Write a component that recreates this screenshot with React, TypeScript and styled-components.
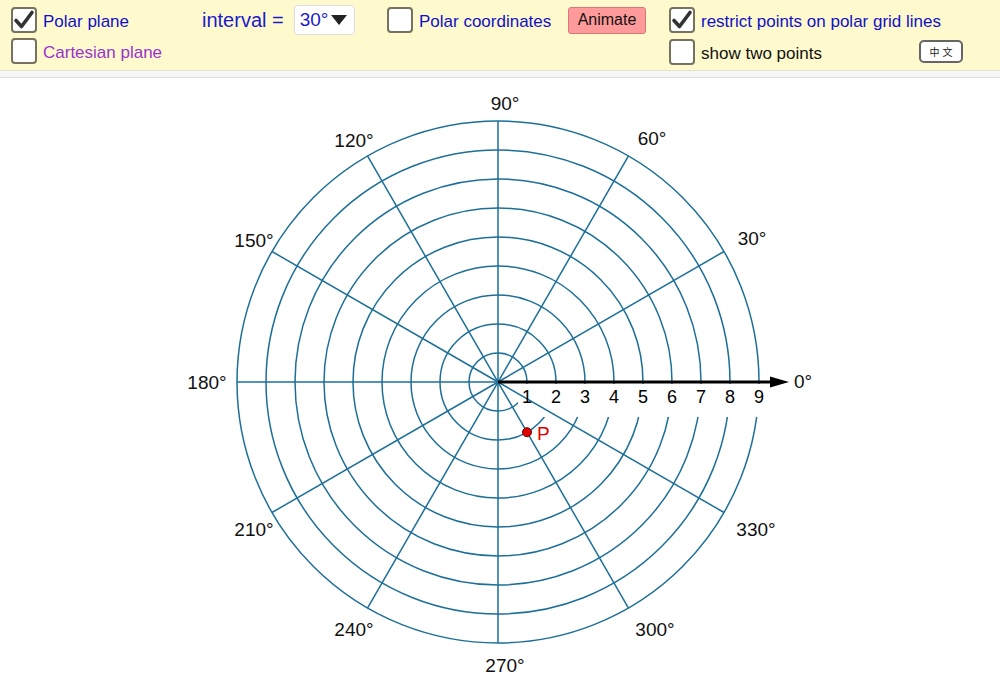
import React from 'react';
import styled, { createGlobalStyle } from 'styled-components';

const GlobalStyle = createGlobalStyle`
  html, body {
    margin: 0;
    padding: 0;
    background: #fff;
    overflow: hidden;
  }
  body {
    font-family: "Liberation Sans", Arial, sans-serif;
  }
`;

const Page = styled.div`
  width: 1000px;
  height: 690px;
  display: flex;
  flex-direction: column;
`;

const Toolbar = styled.div`
  flex: 0 0 70px;
  box-sizing: border-box;
  background: #fffacd;
  padding: 7px 0 0 11px;
  display: grid;
  grid-template-columns: 191px 185px 181px 101px 1fr;
  grid-template-rows: 26px 26px;
  row-gap: 5px;
  align-items: center;
`;

const Rule = styled.div`
  flex: 0 0 6px;
  background: #f7f7f7;
  border-top: 1px solid #e4e1cc;
  border-bottom: 1px solid #dcdcdc;
`;

const Cell = styled.div<{ $col: number; $row: number; $down?: number }>`
  grid-column: ${(p) => p.$col};
  grid-row: ${(p) => p.$row};
  display: flex;
  align-items: center;
  position: relative;
  top: ${(p) => p.$down ?? 0}px;
`;

const Option = styled.label<{ $color: string }>`
  display: flex;
  align-items: center;
  gap: 6px;
  font-size: 17px;
  color: ${(p) => p.$color};
  cursor: pointer;
`;

const OptionText = styled.span`
  position: relative;
  top: 2px;
`;

const Box = styled.span`
  flex: 0 0 26px;
  width: 26px;
  height: 26px;
  box-sizing: border-box;
  border: 2px solid #77725f;
  border-radius: 4px;
  background: #fff;
  display: flex;
  align-items: center;
  justify-content: center;
`;

const IntervalLabel = styled.span`
  font-size: 20px;
  color: #1a1acc;
  margin-right: 10px;
`;

const Select = styled.div`
  width: 61px;
  height: 30px;
  box-sizing: border-box;
  border: 1px solid #dcdcdc;
  border-radius: 4px;
  background: #fff;
  display: flex;
  align-items: center;
  padding-left: 5px;
  gap: 3px;
  font-size: 19px;
  color: #1a1acc;
`;

const Caret = styled.span`
  width: 0;
  height: 0;
  border-left: 8px solid transparent;
  border-right: 8px solid transparent;
  border-top: 10px solid #222;
`;

const AnimateButton = styled.button`
  width: 78px;
  height: 27px;
  box-sizing: border-box;
  background: #ff9a9a;
  border: 1px solid #d97777;
  border-radius: 3px;
  font-family: "Liberation Sans", Arial, sans-serif;
  font-size: 16px;
  color: #111;
  padding: 0;
`;

const LangButton = styled.button`
  margin-left: auto;
  margin-right: 37px;
  width: 44px;
  height: 23px;
  box-sizing: border-box;
  background: #fff;
  border: 2px solid #666;
  border-radius: 5px;
  font-family: "Noto Sans CJK SC", sans-serif;
  font-size: 10px;
  letter-spacing: 3px;
  color: #222;
  padding: 0 0 0 3px;
  position: relative;
  top: -1px;
`;

const Canvas = styled.div`
  flex: 1 1 auto;
  min-height: 0;
  background: #fff;
  svg {
    display: block;
  }
`;

const Check = ({ on }: { on?: boolean }) => (
  <Box>
    {on && (
      <svg width="22" height="22" viewBox="0 0 22 22">
        <path d="M3 11.5 L8.5 17.5 L19 3.5" fill="none" stroke="#333" strokeWidth="3.6" strokeLinecap="round" strokeLinejoin="round" />
      </svg>
    )}
  </Box>
);

const CX = 498;
const CY = 304;
const STEP = 29;
const GRID = '#1d6f98';

const angleLabels: [string, number, number][] = [
  ['90°', 505, 25],
  ['60°', 652, 60],
  ['30°', 752, 160],
  ['0°', 803, 303],
  ['330°', 756, 451],
  ['300°', 655, 551],
  ['270°', 505, 587],
  ['240°', 354, 551],
  ['210°', 254, 451],
  ['180°', 207, 304],
  ['150°', 254, 162],
  ['120°', 354, 62],
];

const PolarGrid = () => {
  const rings = Array.from({ length: 9 }, (_, i) => (i + 1) * STEP);
  const outer = 9 * STEP;
  const rays = Array.from({ length: 11 }, (_, i) => (i + 1) * 30);
  const pr = 2 * STEP;
  const pa = (-60 * Math.PI) / 180;
  const px = CX + pr * Math.cos(pa);
  const py = CY - pr * Math.sin(pa);
  return (
    <svg width="1000" height="612" viewBox="0 0 1000 612" fontFamily='"Liberation Sans", Arial, sans-serif'>
      {rings.map((r) => (
        <circle key={r} cx={CX} cy={CY} r={r} fill="none" stroke={GRID} strokeWidth="1.5" />
      ))}
      <rect x="518" y="306" width="258" height="33" fill="#fff" />
      {rays.map((a) => {
        const t = (a * Math.PI) / 180;
        return (
          <line
            key={a}
            x1={CX}
            y1={CY}
            x2={CX + outer * Math.cos(t)}
            y2={CY - outer * Math.sin(t)}
            stroke={GRID}
            strokeWidth="1.5"
          />
        );
      })}
      <line x1={CX} y1={CY} x2="772" y2={CY} stroke="#000" strokeWidth="3" />
      <polygon points={`770,${CY - 5.5} 789,${CY} 770,${CY + 5.5}`} fill="#000" />
      {rings.map((r, i) => (
        <text key={r} x={CX + r} y="319" fontSize="18" textAnchor="middle" dominantBaseline="central" fill="#000">
          {i + 1}
        </text>
      ))}
      {angleLabels.map(([t, x, y]) => (
        <text key={t} x={x} y={y} fontSize="19" textAnchor="middle" dominantBaseline="central" fill="#111">
          {t}
        </text>
      ))}
      <circle cx={px} cy={py} r="4.5" fill="#e00000" stroke="#600" strokeWidth="1" />
      <text x={px + 10} y={py + 1} fontSize="19" dominantBaseline="central" fill="#e00000">
        P
      </text>
    </svg>
  );
};

export default function App() {
  return (
    <Page>
      <GlobalStyle />
      <Toolbar>
        <Cell $col={1} $row={1}>
          <Option $color="#1010c8">
            <Check on />
            <OptionText>Polar plane</OptionText>
          </Option>
        </Cell>
        <Cell $col={2} $row={1}>
          <IntervalLabel>interval =</IntervalLabel>
          <Select>
            30°
            <Caret />
          </Select>
        </Cell>
        <Cell $col={3} $row={1}>
          <Option $color="#1010c8">
            <Check />
            <OptionText>Polar coordinates</OptionText>
          </Option>
        </Cell>
        <Cell $col={4} $row={1}>
          <AnimateButton>Animate</AnimateButton>
        </Cell>
        <Cell $col={5} $row={1}>
          <Option $color="#1010c8">
            <Check on />
            <OptionText>restrict points on polar grid lines</OptionText>
          </Option>
        </Cell>
        <Cell $col={1} $row={2}>
          <Option $color="#9933cc">
            <Check />
            <OptionText>Cartesian plane</OptionText>
          </Option>
        </Cell>
        <Cell $col={5} $row={2} $down={1}>
          <Option $color="#111">
            <Check />
            <OptionText>show two points</OptionText>
          </Option>
          <LangButton>中文</LangButton>
        </Cell>
      </Toolbar>
      <Rule />
      <Canvas>
        <PolarGrid />
      </Canvas>
    </Page>
  );
}
